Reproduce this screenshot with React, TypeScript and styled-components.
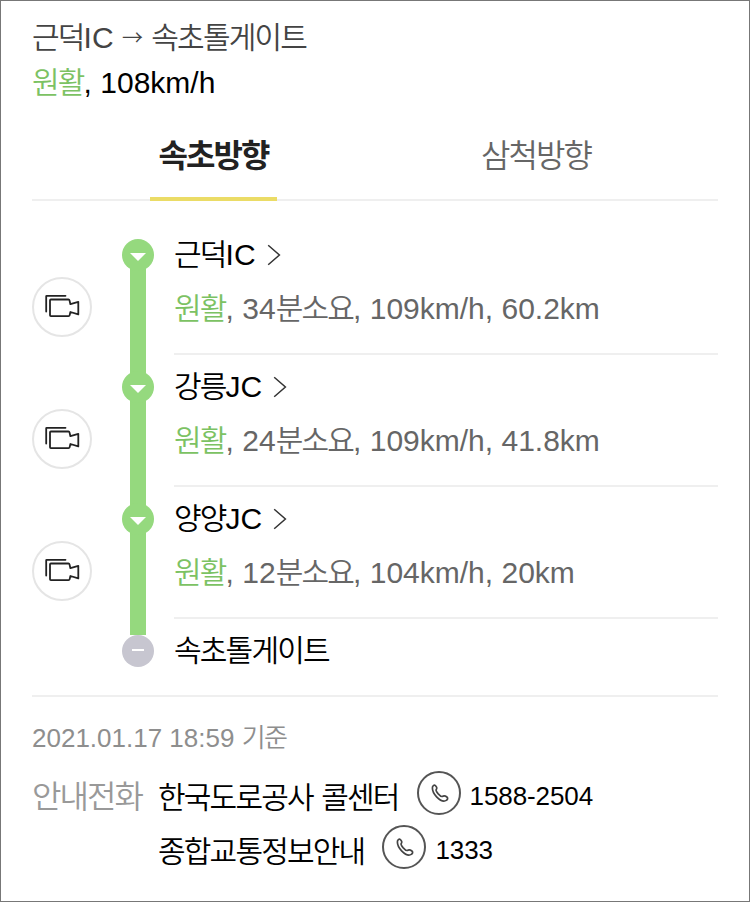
import React from "react";
import styled, { createGlobalStyle } from "styled-components";

const GlobalStyle = createGlobalStyle`
  * { box-sizing: border-box; }
  body { margin: 0; background: #fff; }
`;

const LATIN = '"Liberation Sans", "Noto Sans CJK KR", sans-serif';
const HANGUL = '"Noto Sans CJK KR", sans-serif';

const Page = styled.main`
  width: 750px;
  height: 902px;
  border: 1px solid #777;
  padding: 14px 31px 0;
  background: #fff;
  color: #000;
  font-family: ${LATIN};
  font-size: 30px;
  overflow: hidden;
`;

const Hangul = styled.span<{ $weight: number }>`
  font-family: ${HANGUL};
  font-weight: ${(p) => p.$weight};
  letter-spacing: -0.06em;
  line-height: 1;
`;

const Arrow = styled.span`
  font-family: ${HANGUL};
  font-size: 21px;
  font-weight: 350;
  line-height: 1;
  vertical-align: 3px;
`;

const GREEN = "#7cc263";

function Text({ children, weight = 350 }: { children: string; weight?: number }) {
  const runs = children.split(/([\uac00-\ud7a3]+|→)/).filter(Boolean);
  return (
    <>
      {runs.map((run, i) =>
        run === "→" ? (
          <Arrow key={i}>{run}</Arrow>
        ) : /[\uac00-\ud7a3]/.test(run) ? (
          <Hangul key={i} $weight={weight}>{run}</Hangul>
        ) : (
          <React.Fragment key={i}>{run}</React.Fragment>
        )
      )}
    </>
  );
}

const Line = styled.div<{ $color?: string; $height: number }>`
  height: ${(p) => p.$height}px;
  line-height: ${(p) => p.$height}px;
  color: ${(p) => p.$color ?? "#000"};
  white-space: pre;
`;

const Status = styled.span`
  color: ${GREEN};
`;

const Tabs = styled.nav`
  display: grid;
  grid-template-columns: 363px 282px;
  height: 94px;
  margin-top: 2px;
  border-bottom: 2px solid #efefef;
`;

const Tab = styled.a<{ $active?: boolean }>`
  justify-self: center;
  height: 94px;
  padding: 0 8px;
  border-bottom: ${(p) => (p.$active ? "4px solid #ebdc66" : "0")};
  color: ${(p) => (p.$active ? "#222" : "#666")};
  font-size: 32px;
  line-height: 98px;
  white-space: nowrap;
`;

const Route = styled.ol`
  list-style: none;
  margin: 0;
  padding: 38px 0 0;
  border-bottom: 2px solid #efefef;
  height: 496px;
`;

const Stop = styled.li<{ $last?: boolean }>`
  display: grid;
  grid-template-columns: 90px 32px 20px 1fr;
  height: ${(p) => (p.$last ? 32 : 132)}px;
`;

const CameraButton = styled.button`
  width: 60px;
  height: 60px;
  margin-top: 38px;
  padding: 0;
  border: 2px solid #e5e5e5;
  border-radius: 50%;
  background: #fff;
  display: grid;
  place-items: center;
`;

const Track = styled.div<{ $last?: boolean }>`
  display: flex;
  flex-direction: column;
  align-items: center;
  background: ${(p) =>
    p.$last ? "none" : "linear-gradient(#95d97e, #95d97e) center / 16px 100% no-repeat"};
`;

const FirstCap = styled.div<{ $first: boolean }>`
  background: ${(p) => (p.$first ? "#fff" : "transparent")};
  width: 32px;
  height: 16px;
  margin-bottom: -16px;
`;

const Node = styled.div<{ $last?: boolean }>`
  width: 32px;
  height: 32px;
  flex: none;
  border-radius: 50%;
  background: ${(p) => (p.$last ? "#c7c6d0" : "#95d97e")};
`;

const Info = styled.div<{ $last?: boolean }>`
  border-bottom: ${(p) => (p.$last ? "0" : "2px solid #efefef")};
  height: 116px;
`;

const NameLine = styled.div`
  display: flex;
  align-items: center;
  gap: 11px;
  height: 32px;
  line-height: 32px;
  white-space: pre;
`;

const Name = styled.span`
  margin-bottom: 2px;
`;

const Detail = styled.div`
  margin-top: 20px;
  height: 32px;
  line-height: 32px;
  color: #666;
  white-space: pre;
`;

const Updated = styled.p`
  margin: 21px 0 0;
  height: 40px;
  color: #8e8e8e;
  font-size: 26px;
  line-height: 40px;
`;

const Contacts = styled.section`
  display: grid;
  grid-template-columns: 126px 1fr;
  margin-top: 12px;
`;

const ContactLabel = styled.div`
  color: #999;
  font-size: 32px;
  line-height: 54px;
  white-space: nowrap;
`;

const Contact = styled.div`
  display: flex;
  align-items: center;
  height: 54px;
  white-space: pre;
`;

const PhoneButton = styled.button`
  width: 44px;
  height: 44px;
  margin: 0 9px 8px 18px;
  padding: 0;
  border: 2px solid #555;
  border-radius: 50%;
  background: #fff;
  display: grid;
  place-items: center;
`;

const PhoneNumber = styled.span`
  margin-bottom: 1px;
  font-size: 26px;
  letter-spacing: -0.1px;
`;

const Icon = styled.svg`
  display: block;
  fill: none;
`;

const Camera = () => (
  <Icon width="36" height="26" viewBox="0 0 36 26" stroke="#222" strokeWidth="1.8" strokeLinejoin="round" strokeLinecap="round">
    <path d="M2.2 17.5V2.3Q2.2 1.8 2.7 1.8H21.5" />
    <path d="M6.9 5.5H24.4Q25.3 5.5 25.5 6.4L26.4 10.2L34.3 7.8V20.4L26.4 18L25.6 21.4Q25.4 22.2 24.5 22.2H6.9Q6 22.2 6 21.3V6.4Q6 5.5 6.9 5.5Z" />
  </Icon>
);

const Phone = () => (
  <Icon width="22" height="22" viewBox="0 0 22 22" stroke="#444" strokeWidth="1.7" strokeLinejoin="round">
    <path d="M4.4 6C4.3 3.9 6.1 2.6 7.4 3.6C8.7 4.7 9.3 6.4 8.2 7.6C7.5 8.6 8.4 9.7 10 11.6C11.9 13.7 13.2 15 14.3 14.4C15.8 13.5 17.5 13.9 18.9 15C20.2 16.1 19.7 17.5 18.3 18.4C15.7 20 11.5 17.8 8.6 14.8C6.1 12.2 4.4 9 4.4 6Z" />
  </Icon>
);

const Chevron = () => (
  <Icon width="14" height="22" viewBox="0 0 14 22" stroke="#333" strokeWidth="1.5">
    <path d="M1.2 1.3L12.4 11L1.2 20.7" />
  </Icon>
);

const stops = [
  { name: "근덕IC", detail: ", 34분소요, 109km/h, 60.2km" },
  { name: "강릉JC", detail: ", 24분소요, 109km/h, 41.8km" },
  { name: "양양JC", detail: ", 12분소요, 104km/h, 20km" },
];

const contacts = [
  { name: "한국도로공사 콜센터", number: "1588-2504" },
  { name: "종합교통정보안내", number: "1333" },
];

export default function App() {
  return (
    <Page>
      <GlobalStyle />
      <Line $color="#444" $height={46}><Text>근덕IC → 속초톨게이트</Text></Line>
      <Line $height={44}><Status><Text>원활</Text></Status>, 108km/h</Line>
      <Tabs>
        <Tab $active><Text weight={700}>속초방향</Text></Tab>
        <Tab><Text>삼척방향</Text></Tab>
      </Tabs>
      <Route>
        {stops.map((stop, i) => (
          <Stop key={stop.name}>
            <CameraButton aria-label="CCTV"><Camera /></CameraButton>
            <Track>
              <FirstCap $first={i === 0} />
              <Node>
                <Icon width="32" height="32" viewBox="0 0 32 32">
                  <path d="M8 14H24L16 22Z" fill="#fff" />
                </Icon>
              </Node>
            </Track>
            <span />
            <Info>
              <NameLine><Name><Text>{stop.name}</Text></Name><Chevron /></NameLine>
              <Detail><Status><Text>원활</Text></Status><Text>{stop.detail}</Text></Detail>
            </Info>
          </Stop>
        ))}
        <Stop $last>
          <span />
          <Track $last>
            <Node $last>
              <Icon width="32" height="32" viewBox="0 0 32 32">
                <path d="M10 15H22" stroke="#fff" strokeWidth="2" />
              </Icon>
            </Node>
          </Track>
          <span />
          <Info $last><NameLine><Name><Text>속초톨게이트</Text></Name></NameLine></Info>
        </Stop>
      </Route>
      <Updated><Text>2021.01.17 18:59 기준</Text></Updated>
      <Contacts>
        <ContactLabel><Text>안내전화</Text></ContactLabel>
        <div>
          {contacts.map((c) => (
            <Contact key={c.name}>
              <span><Text>{c.name}</Text></span>
              <PhoneButton aria-label="전화"><Phone /></PhoneButton>
              <PhoneNumber>{c.number}</PhoneNumber>
            </Contact>
          ))}
        </div>
      </Contacts>
    </Page>
  );
}
